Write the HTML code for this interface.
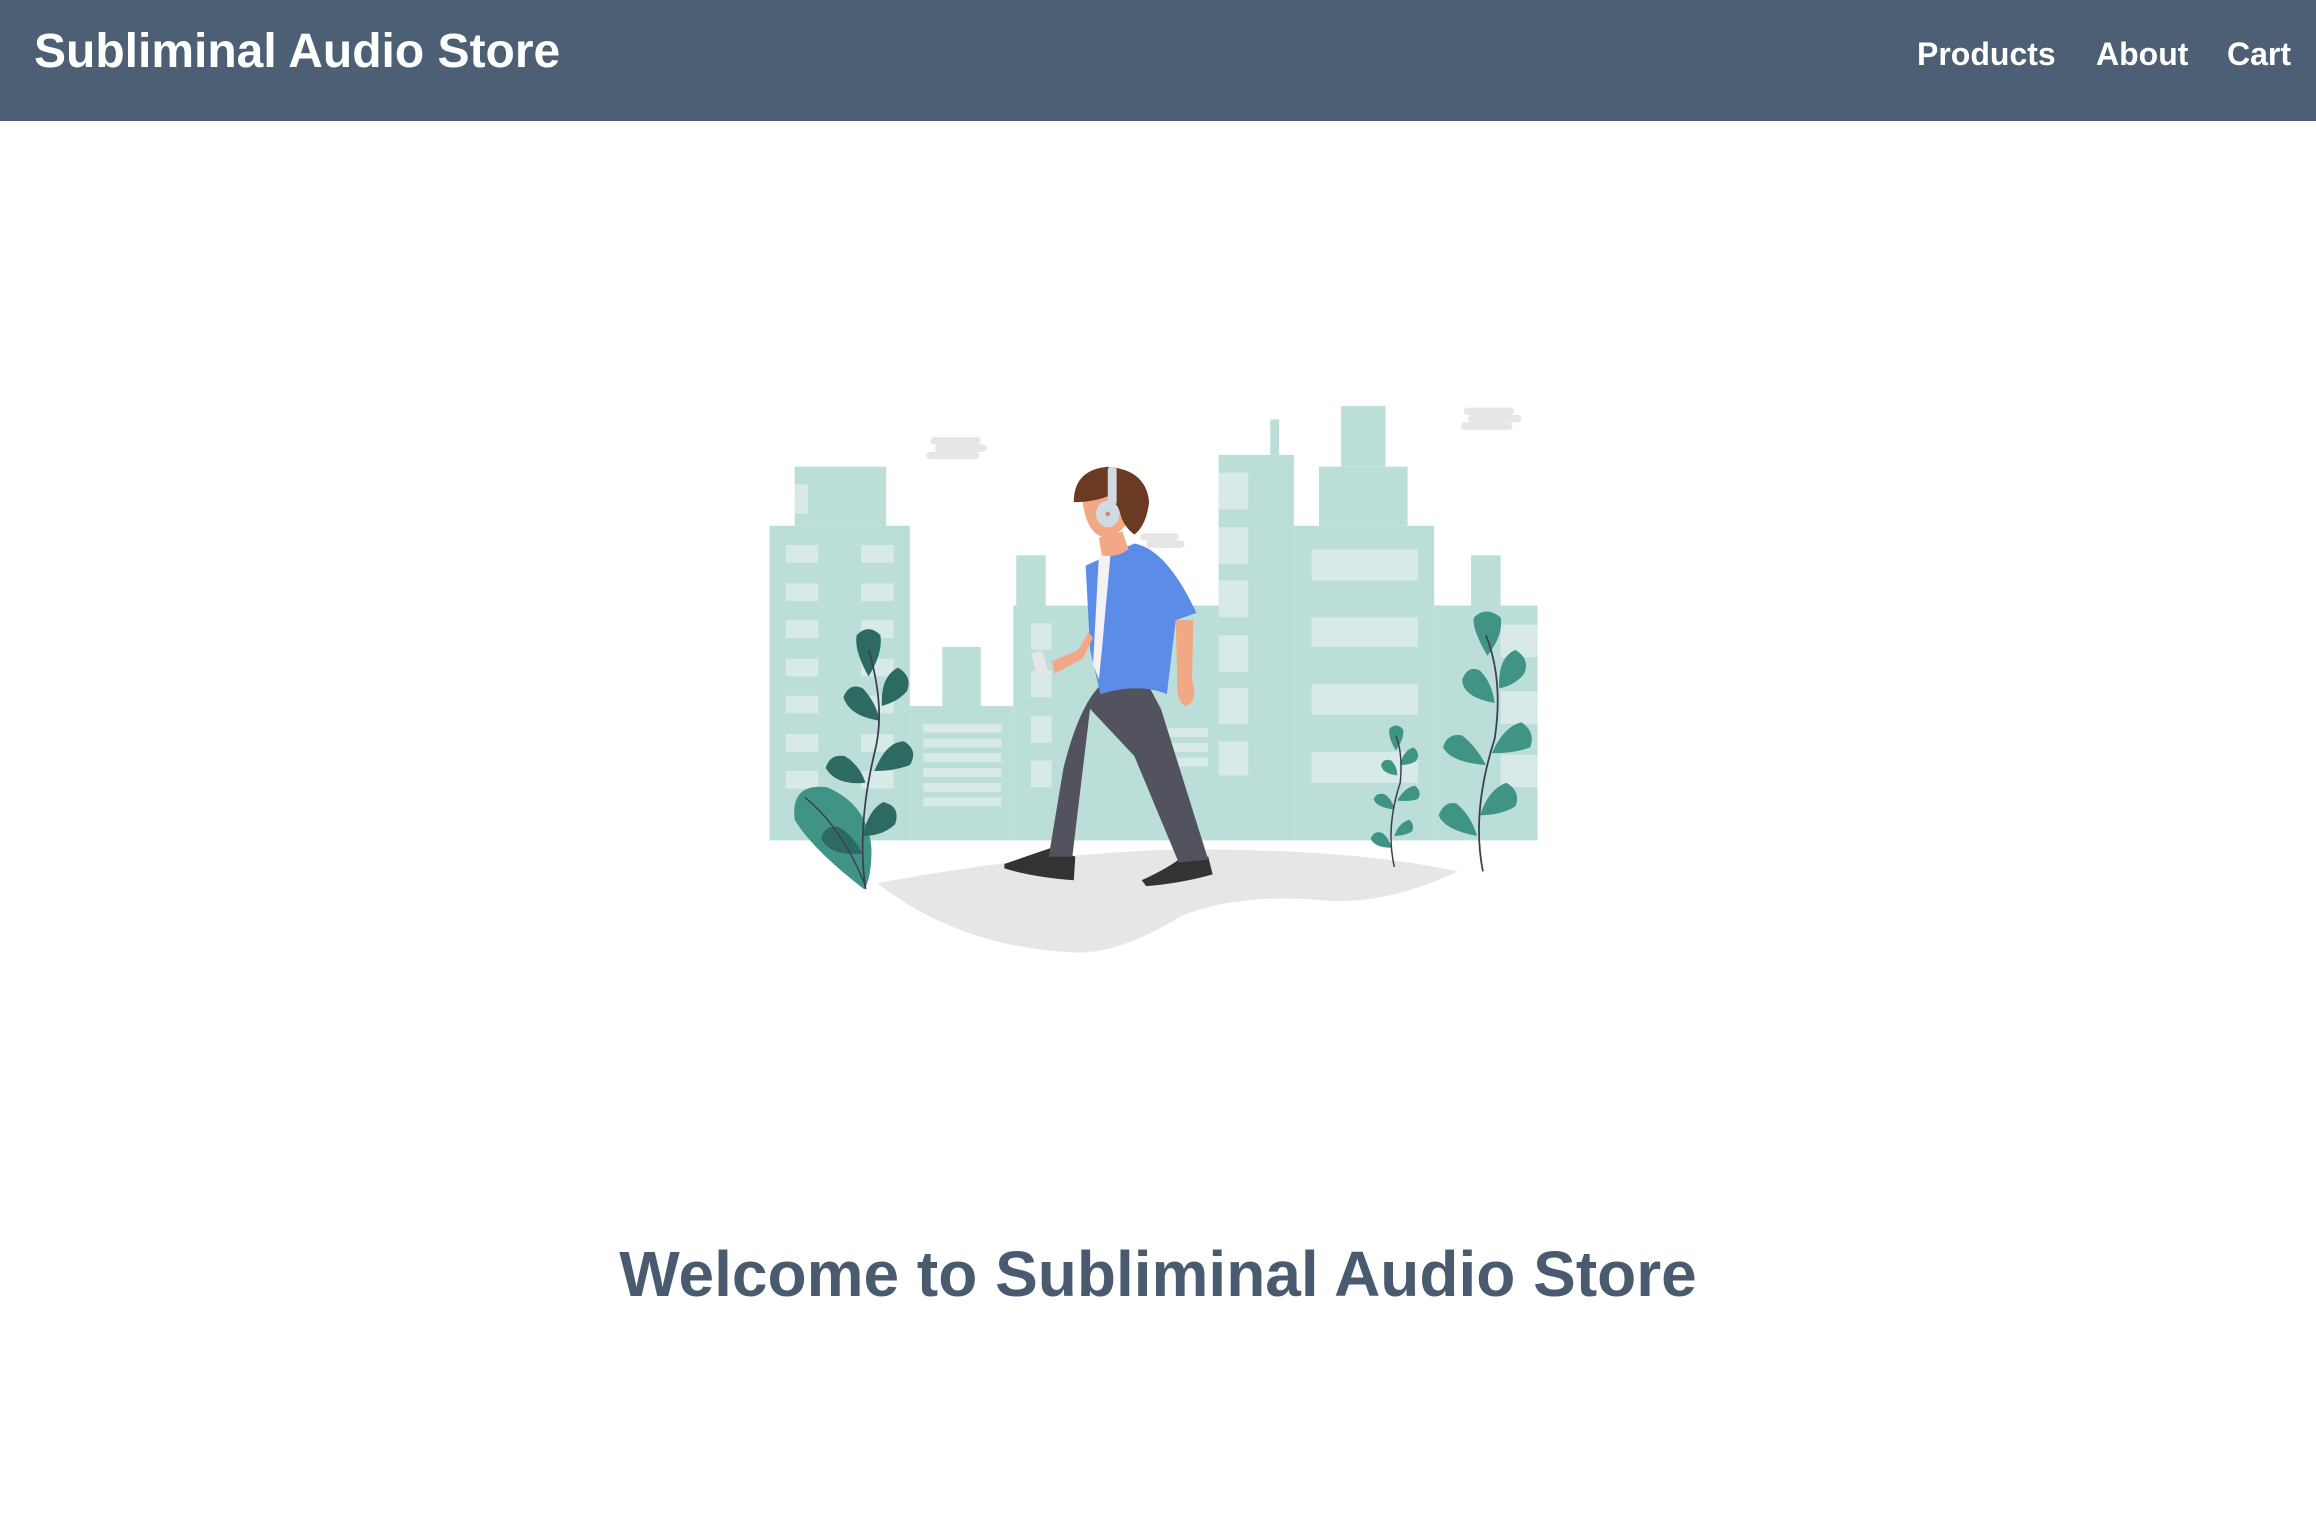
<!DOCTYPE html>
<html><head><meta charset="utf-8"><style>
html,body{margin:0;padding:0;background:#fff;width:2316px;height:1536px;overflow:hidden;font-family:"Liberation Sans",Arial,sans-serif}
.hdr{position:absolute;left:0;top:0;width:2316px;height:121px;background:#4c5f74;color:#fff}
.t{position:absolute;left:34px;top:23px;font-size:48px;font-weight:bold;line-height:58px}
.nav{position:absolute;top:34px;font-size:32px;font-weight:bold;line-height:40px}
h1{position:absolute;left:0;width:2316px;top:1236px;margin:0;text-align:center;font-size:64px;line-height:76px;color:#4a5b70;font-weight:bold}
svg{position:absolute;left:0;top:0}
</style></head><body>
<div class="hdr"><div class="t">Subliminal Audio Store</div>
<div class="nav" style="left:1917px">Products</div>
<div class="nav" style="left:2096px">About</div>
<div class="nav" style="left:2227px">Cart</div></div>
<svg width="2316" height="1536" viewBox="0 0 1568 1040">
<g fill="#e6e6e6">
<rect x="630" y="296" width="34" height="5" rx="2.5"/><rect x="633" y="301" width="35" height="5" rx="2.5"/><rect x="627" y="306" width="36" height="5" rx="2.5"/>
<rect x="991" y="276" width="34" height="5" rx="2.5"/><rect x="994" y="281" width="36" height="5" rx="2.5"/><rect x="989" y="286" width="35" height="5" rx="2.5"/>
<rect x="772" y="361" width="26" height="5" rx="2.5"/><rect x="776" y="366" width="26" height="5" rx="2.5"/>
</g>
<g fill="#bcded9">
<rect x="521" y="356" width="95" height="213"/><rect x="538" y="316" width="62" height="40"/>
<rect x="616" y="478" width="70" height="91"/><rect x="638" y="438" width="26" height="40"/>
<rect x="686" y="410" width="139" height="159"/><rect x="688" y="376" width="20" height="34"/>
<rect x="825" y="308" width="51" height="261"/><rect x="860" y="284" width="6" height="24"/>
<rect x="876" y="356" width="95" height="213"/><rect x="893" y="316" width="60" height="40"/><rect x="908" y="275" width="30" height="41"/>
<rect x="971" y="410" width="70" height="159"/><rect x="996" y="376" width="20" height="34"/>
</g>
<g fill="#d7eae8">
<rect x="538" y="328" width="9" height="20"/>
<rect x="532" y="369" width="22" height="12"/><rect x="583" y="369" width="22" height="12"/>
<rect x="532" y="395" width="22" height="12"/><rect x="583" y="395" width="22" height="12"/>
<rect x="532" y="420" width="22" height="12"/><rect x="583" y="420" width="22" height="12"/>
<rect x="532" y="446" width="22" height="12"/><rect x="583" y="446" width="22" height="12"/>
<rect x="532" y="471" width="22" height="12"/><rect x="583" y="471" width="22" height="12"/>
<rect x="532" y="497" width="22" height="12"/><rect x="583" y="497" width="22" height="12"/>
<rect x="532" y="522" width="22" height="12"/><rect x="583" y="522" width="22" height="12"/>
<rect x="625" y="490" width="53" height="6"/><rect x="625" y="500" width="53" height="6"/><rect x="625" y="510" width="53" height="6"/><rect x="625" y="520" width="53" height="6"/><rect x="625" y="530" width="53" height="6"/><rect x="625" y="540" width="53" height="6"/>
<rect x="698" y="422" width="14" height="18"/><rect x="698" y="454" width="14" height="18"/><rect x="698" y="485" width="14" height="18"/><rect x="698" y="515" width="14" height="18"/>
<rect x="790" y="493" width="28" height="6"/><rect x="790" y="503" width="28" height="6"/><rect x="790" y="513" width="28" height="6"/>
<rect x="825" y="320" width="20" height="25"/><rect x="825" y="357" width="20" height="25"/><rect x="825" y="393" width="20" height="25"/><rect x="825" y="430" width="20" height="25"/><rect x="825" y="466" width="20" height="24"/><rect x="825" y="502" width="20" height="23"/>
<rect x="888" y="372" width="72" height="21"/><rect x="888" y="418" width="72" height="20"/><rect x="888" y="463" width="72" height="21"/><rect x="888" y="509" width="72" height="21"/>
<rect x="1016" y="423" width="25" height="22"/><rect x="1016" y="468" width="25" height="22"/><rect x="1016" y="511" width="25" height="22"/>
</g>
<path d="M594 598 Q700 578 800 575 Q920 575 987 590 Q940 612 900 610 Q840 604 800 620 Q760 645 730 645 Q650 642 594 598Z" fill="#e6e6e6"/>
<path d="M585 602 Q550 575 538 555 Q535 530 560 533 Q588 545 590 575 Q590 595 585 602Z" fill="#3f9485"/>
<g fill="#2d6b62">
<path d="M588 458 Q578 440 580 430 Q588 422 596 430 Q598 442 588 458Z"/>
<path d="M597 478 Q596 458 608 452 Q618 458 614 468 Q608 475 597 478Z"/>
<path d="M596 488 Q575 485 571 472 Q575 462 584 466 Q592 474 596 488Z"/>
<path d="M592 522 Q600 502 612 502 Q622 508 616 518 Q606 522 592 522Z"/>
<path d="M586 530 Q566 532 559 520 Q562 510 572 512 Q582 518 586 530Z"/>
<path d="M584 566 Q588 548 598 543 Q610 546 606 558 Q598 566 584 566Z"/>
<path d="M584 578 Q562 580 556 568 Q558 558 568 560 Q578 566 584 578Z"/>
</g>
<path d="M586 602 Q580 560 592 510 Q600 480 588 440" stroke="#3f3d56" stroke-width="1.2" fill="none"/>
<path d="M586 600 Q570 560 545 540" stroke="#3f3d56" stroke-width="1" fill="none"/>
<g fill="#3f9485">
<path d="M1007 444 Q996 425 998 418 Q1006 410 1016 418 Q1018 430 1007 444Z"/>
<path d="M1015 466 Q1014 445 1026 440 Q1036 446 1032 456 Q1026 464 1015 466Z"/>
<path d="M1012 476 Q990 472 990 460 Q994 450 1002 454 Q1010 462 1012 476Z"/>
<path d="M1010 510 Q1018 492 1030 489 Q1040 496 1036 506 Q1026 510 1010 510Z"/>
<path d="M1006 518 Q982 516 977 506 Q980 496 990 498 Q1000 506 1006 518Z"/>
<path d="M1002 552 Q1008 534 1020 530 Q1030 536 1026 546 Q1016 552 1002 552Z"/>
<path d="M1000 566 Q978 562 974 552 Q978 542 986 544 Q996 552 1000 566Z"/>
<path d="M945 508 Q939 498 941 493 Q946 489 950 494 Q951 500 945 508Z"/>
<path d="M948 518 Q950 508 957 506 Q962 510 959 515 Q955 518 948 518Z"/>
<path d="M946 525 Q936 524 935 518 Q937 513 942 515 Q946 519 946 525Z"/>
<path d="M946 542 Q951 533 958 532 Q963 536 960 541 Q954 543 946 542Z"/>
<path d="M944 548 Q932 547 930 541 Q932 536 938 538 Q943 542 944 548Z"/>
<path d="M944 566 Q947 557 954 555 Q958 558 956 563 Q951 566 944 566Z"/>
<path d="M942 574 Q931 574 928 568 Q930 562 936 564 Q941 568 942 574Z"/>
</g>
<path d="M1004 590 Q996 550 1012 500 Q1018 460 1006 430" stroke="#3f3d56" stroke-width="1.2" fill="none"/>
<path d="M944 587 Q938 560 948 530 Q950 510 945 498" stroke="#3f3d56" stroke-width="1" fill="none"/>
<path d="M680 585 Q700 578 712 574 L728 580 L727 596 Q700 594 680 588Z" fill="#333"/>
<path d="M773 596 Q790 588 798 582 L818 580 L821 592 Q800 598 776 600Z" fill="#333"/>
<path d="M744 465 Q760 458 778 465 L786 480 L818 582 L798 584 L768 512 L738 480 L726 580 L710 580 L720 520 Q730 480 744 465Z" fill="#535360"/>
<path d="M735 383 L768 368 Q790 372 810 415 L796 420 L790 470 Q770 462 745 470 L738 440Z" fill="#5b8de8"/>
<path d="M744 376 L752 374 L746 440 L744 460 L740 450Z" fill="#f2f2f2"/>
<path d="M796 420 L808 420 L807 460 Q812 476 802 478 Q796 474 797 460Z" fill="#f2a884"/>
<path d="M737 428 L730 440 L712 448 L714 456 L733 446 L740 432Z" fill="#f2a884"/>
<rect x="700" y="441" width="8" height="16" rx="2" fill="#e6e6e6" transform="rotate(-15 704 449)"/>
<path d="M744 364 L760 360 L764 372 Q756 378 746 376Z" fill="#f2a884"/>
<path d="M733 340 Q732 322 752 322 Q764 326 766 346 Q762 362 748 364 Q736 362 733 340Z" fill="#f2a884"/>
<path d="M727 338 Q728 318 750 316 Q776 318 778 340 Q776 356 768 362 Q760 356 758 346 L750 336 Q740 340 727 340Z" fill="#6b3a22"/>
<rect x="750" y="316" width="6" height="26" rx="2" fill="#d0dae3"/>
<ellipse cx="750" cy="348" rx="8" ry="9" fill="#d0dae3"/>
<circle cx="750" cy="348" r="1.5" fill="#e07a6a"/>
</svg>
<h1>Welcome to Subliminal Audio Store</h1>
</body></html>
